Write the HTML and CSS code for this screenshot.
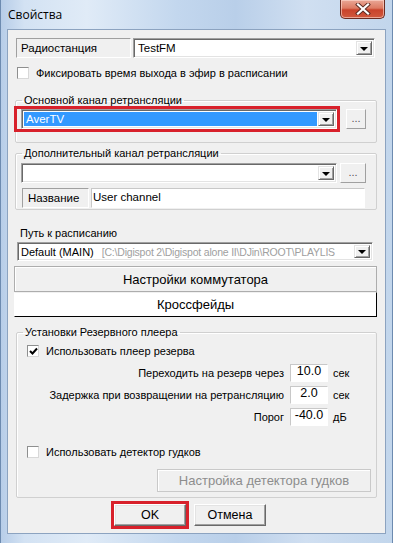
FILE: index.html
```html
<!DOCTYPE html>
<html lang="ru">
<head>
<meta charset="utf-8">
<title>Свойства</title>
<link rel="stylesheet" href="styles.css">
</head>
<body>
<div class="window">
  <div class="titlebar">
    <span class="title">Свойства</span>
    <div class="close">
      <svg width="16" height="12" viewBox="0 0 16 12"><path d="M3 1.5 L13 10.5 M13 1.5 L3 10.5" stroke="#5a2a22" stroke-width="4" stroke-linecap="square"/><path d="M3 1.5 L13 10.5 M13 1.5 L3 10.5" stroke="#fff" stroke-width="2.2" stroke-linecap="square"/></svg>
    </div>
  </div>
  <div class="client">
    <div class="row r-station">
      <div class="lbox lbox-station">Радиостанция</div>
      <div class="combo combo-station"><span class="ctext">TestFM</span><span class="arrow"></span></div>
    </div>
    <div class="chkrow r-fix">
      <span class="chk"></span><span class="chktext">Фиксировать время выхода в эфир в расписании</span>
    </div>

    <fieldset class="group g1">
      <legend>Основной канал ретрансляции</legend>
      <div class="row">
        <div class="mark-wrap combo-ch">
          <div class="combo combo-fill"><span class="ctext sel">AverTV</span><span class="arrow"></span></div>
          <div class="redmark redmark-ch"></div>
        </div>
        <div class="btn dots dots1">...</div>
      </div>
    </fieldset>

    <fieldset class="group g2">
      <legend>Дополнительный канал ретрансляции</legend>
      <div class="row">
        <div class="combo combo-ch"><span class="ctext"></span><span class="arrow"></span></div>
        <div class="btn dots dots2">...</div>
      </div>
      <div class="row r-name">
        <div class="lbox lbox-name">Название</div>
        <div class="field field-name">User channel</div>
      </div>
    </fieldset>

    <div class="plabel">Путь к расписанию</div>
    <div class="combo combo-path"><span class="ctext"><span>Default (MAIN)</span><span class="grey">[C:\Digispot 2\Digispot alone II\DJin\ROOT\PLAYLIS</span></span><span class="arrow"></span></div>

    <div class="bigbtn bb1">Настройки коммутатора</div>
    <div class="bigbtn bb2">Кроссфейды</div>

    <fieldset class="group g3">
      <legend>Установки Резервного плеера</legend>
      <div class="chkrow r-use">
        <span class="chk checked"><svg width="9" height="9" viewBox="0 0 9 9"><path d="M1 4 L3.5 6.5 L8 1.5" fill="none" stroke="#000" stroke-width="2"/></svg></span><span class="chktext">Использовать плеер резерва</span>
      </div>
      <div class="vals">
        <div class="vrow"><span class="vlabel">Переходить на резерв через</span><span class="vinput">10.0</span><span class="vunit">сек</span></div>
        <div class="vrow"><span class="vlabel">Задержка при возвращении на ретрансляцию</span><span class="vinput">2.0</span><span class="vunit">сек</span></div>
        <div class="vrow"><span class="vlabel">Порог</span><span class="vinput">-40.0</span><span class="vunit">дБ</span></div>
      </div>
      <div class="chkrow r-det">
        <span class="chk"></span><span class="chktext">Использовать детектор гудков</span>
      </div>
      <div class="btn disbtn">Настройка детектора гудков</div>
    </fieldset>

    <div class="footer">
      <div class="mark-wrap">
        <div class="btn fbtn">OK</div>
        <div class="redmark redmark-ok"></div>
      </div>
      <div class="btn fbtn">Отмена</div>
    </div>
  </div>
</div>
</body>
</html>
```
FILE: styles.css
```css
* { box-sizing: border-box; }
html, body { margin: 0; padding: 0; }
body {
  width: 393px; height: 543px; overflow: hidden;
  font-family: "Liberation Sans", Arial, sans-serif;
  font-size: 11px; color: #000;
}
.window {
  width: 393px; height: 543px;
  display: flex; flex-direction: column;
  background: linear-gradient(to right, #b7cde8 0%, #d3e2f3 6%, #e0ebf7 22%, #c3d7ee 45%, #b9cfe9 60%, #d0dff1 78%, #c2d6ec 100%);
  border-left: 1px solid #6d8bb0;
  border-right: 1px solid #6d8bb0;
}
.titlebar {
  height: 29px; flex: none;
  display: flex; align-items: flex-start;
  padding-left: 7px;
}
.title {
  font-family: "Open Sans", "Liberation Sans", sans-serif;
  font-size: 12px; line-height: 16px; margin-top: 7px; color: #000;
}
.close {
  margin-left: auto; margin-right: 7px;
  width: 45px; height: 19px;
  border: 1px solid #6b2c22; border-top: none;
  border-radius: 0 0 5px 5px;
  background: linear-gradient(#e9a796 0%, #dd7b63 45%, #c9432b 55%, #d0593e 100%);
  box-shadow: inset 0 0 0 1px rgba(255,220,210,0.6);
  display: flex; align-items: center; justify-content: center;
}
.client {
  flex: none;
  margin-left: 6px;
  width: 379px; height: 505px;
  border: 1px solid #8ca3c0;
  background: #f0f0f0;
  display: flex; flex-direction: column; align-items: flex-start;
}
.row { display: flex; align-items: flex-start; }
.r-station { margin-top: 8px; margin-left: 8px; height: 20px; }

/* sunken label box */
.lbox {
  height: 20px;
  border: 1px solid; border-color: #a0a0a0 #fff #fff #a0a0a0;
  padding-left: 4px;
  display: flex; align-items: center;
  font-size: 11.5px;
}
.lbox-station { width: 115px; }
.lbox-name { width: 67px; padding-left: 5px; }

/* combo box */
.combo {
  position: relative;
  height: 20px; background: #fff;
  border: 1px solid; border-color: #a0a0a0 #fff #fff #a0a0a0;
  box-shadow: inset 1px 1px 0 #696969, inset -1px -1px 0 #e3e3e3;
  display: flex; align-items: stretch;
  padding: 2px;
}
.combo-station { width: 242px; margin-left: 2px; font-size: 11.5px; }
.ctext {
  flex: 1; display: flex; align-items: center;
  padding-left: 2px; white-space: nowrap; overflow: hidden;
}
.ctext.sel { background: #3399ff; color: #fff; margin-right: 1px; font-size: 11.5px; }
.arrow {
  flex: none; width: 16px;
  background: #f0f0f0;
  border: 1px solid; border-color: #e3e3e3 #696969 #696969 #e3e3e3;
  box-shadow: inset 1px 1px 0 #fff, inset -1px -1px 0 #a0a0a0;
  display: flex; align-items: center; justify-content: center;
}
.arrow::after {
  content: ""; width: 0; height: 0;
  border-left: 4px solid transparent; border-right: 4px solid transparent;
  border-top: 4px solid #000; margin-top: 1px;
}

/* checkbox */
.chkrow { display: flex; align-items: center; }
.r-fix { margin-top: 4px; margin-left: 9px; height: 22px; }
.chk {
  width: 12px; height: 12px; flex: none;
  background: #fff;
  border: 1px solid; border-color: #8e8f8f #d8d8d8 #d8d8d8 #8e8f8f;
  display: flex; align-items: center; justify-content: center;
}
.chktext { margin-left: 7px; }

/* group boxes */
fieldset.group {
  margin: 0; padding: 0; min-width: 0;
  border: 1px solid #d0d0d0;
  border-radius: 2px;
  box-shadow: inset 1px 1px 0 #fff;
}
fieldset.group legend {
  padding: 0 2px; margin-left: 6px;
  line-height: 14px; height: 14px;
}
.g1 { margin-top: 9px !important; margin-left: 7px !important; width: 362px; padding: 2px 0 13px 0 !important; }
.g1 .row { height: 20px; }
.combo-ch { width: 316px; margin-left: 5px; }
.combo-fill { width: 100%; }
.mark-wrap { position: relative; }
.redmark {
  position: absolute;
  border: 3px solid #d8212b;
  pointer-events: none;
}
.redmark-ch { left: -7px; right: -3px; top: -3px; bottom: -3px; }
.redmark-ok { left: -3px; right: -3px; top: -3px; bottom: -3px; }

.btn {
  background: #f0f0f0;
  border: 1px solid; border-color: #fff #696969 #696969 #fff;
  box-shadow: inset -1px -1px 0 #a0a0a0, inset 1px 1px 0 #e3e3e3;
  display: flex; align-items: center; justify-content: center;
}
.dots { height: 20px; color: #555; font-size: 11px; padding-bottom: 3px; }
.dots1 { width: 20px; margin-left: 9px; border-color: #fff #a0a0a0 #a0a0a0 #fff; box-shadow: none; }
.dots2 { width: 26px; margin-left: 3px; border-color: #fff #a0a0a0 #a0a0a0 #fff; box-shadow: none; }

.g2 { margin-top: 3px !important; margin-left: 7px !important; width: 362px; padding: 3px 0 1px 0 !important; }
.g2 > .row:first-of-type { height: 20px; }
.r-name { margin-top: 5px; margin-left: 6px; height: 20px; }
.field {
  height: 20px; background: #fff;
  border: 1px solid; border-color: #c8c8c8 #fff #fff #c8c8c8;
  padding: 1px 0 0 1px; line-height: 14px; font-size: 11.5px;
}
.field-name { width: 274px; margin-left: 2px; }

.plabel { margin-top: 16px; margin-left: 12px; line-height: 14px; height: 14px; }
.combo-path { margin-top: 2px; margin-left: 9px; width: 356px; height: 19px; }
.combo-path .ctext { padding-left: 1px; }
.grey { color: #a0a0a0; margin-left: 8px; font-size: 10.5px; letter-spacing: -0.2px; }

.bigbtn {
  margin-left: 6px; width: 363px;
  display: flex; align-items: center; justify-content: center;
  font-size: 13px;
}
.bb1 {
  margin-top: 5px; height: 26px;
  background: #f0f0f0;
  border: 1px solid #adadad;
  box-shadow: inset 1px 1px 0 #fff;
}
.bb2 {
  height: 25px; background: #fff;
  border: 1px solid; border-color: #f0f0f0 #000 #000 #fff;
}

.g3 { margin-top: 8px !important; margin-left: 8px !important; width: 361px; padding: 0 0 5px 0 !important; display: flex; flex-direction: column; }
.r-use { margin-top: 5px; margin-left: 10px; height: 14px; }
.vals { margin-top: 6px; display: flex; flex-direction: column; gap: 4px; }
.vrow { display: flex; align-items: center; height: 18px; padding-right: 5px; }
.vlabel { flex: 1; text-align: right; margin-right: 6px; }
.vinput {
  width: 38px; height: 18px; background: #fff;
  border: 1px solid; border-color: #c8c8c8 #fff #fff #c8c8c8;
  text-align: center; font-size: 12.5px; line-height: 13px;
}
.vunit { width: 38px; margin-left: 5px; }
.r-det { margin-top: 19px; margin-left: 10px; height: 14px; }
.disbtn {
  margin-top: 10px; margin-left: 140px;
  width: 214px; height: 23px;
  font-size: 13px; color: #8d8d8d;
  border: 1px solid #c9c9c9; box-shadow: inset 1px 1px 0 #fff;
}

.footer { margin-top: 6px; margin-left: 106px; display: flex; gap: 8px; }
.fbtn { width: 72px; height: 22px; font-size: 12.5px; }
```
